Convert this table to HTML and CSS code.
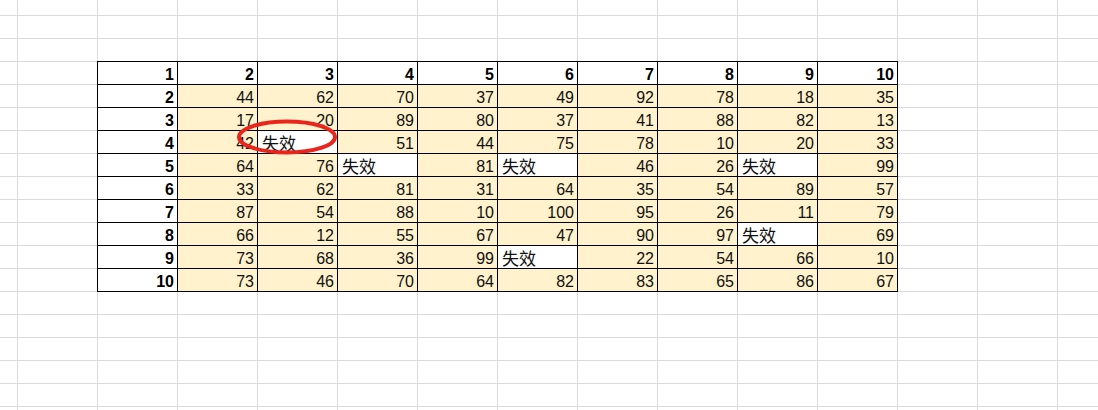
FILE: index.html
```html
<!DOCTYPE html>
<html lang="zh">
<head>
<meta charset="utf-8">
<title>Sheet</title>
<link rel="stylesheet" href="styles.css">
</head>
<body>
<div class="sheet">
  <div class="wrap">
    <div class="grid">
      <div class="c h">1</div><div class="c h">2</div><div class="c h">3</div><div class="c h">4</div><div class="c h">5</div><div class="c h">6</div><div class="c h">7</div><div class="c h">8</div><div class="c h">9</div><div class="c h">10</div>

      <div class="c h">2</div><div class="c n">44</div><div class="c n">62</div><div class="c n">70</div><div class="c n">37</div><div class="c n">49</div><div class="c n">92</div><div class="c n">78</div><div class="c n">18</div><div class="c n">35</div>

      <div class="c h">3</div><div class="c n">17</div><div class="c n">20</div><div class="c n">89</div><div class="c n">80</div><div class="c n">37</div><div class="c n">41</div><div class="c n">88</div><div class="c n">82</div><div class="c n">13</div>

      <div class="c h">4</div><div class="c n">42</div><div class="c x">失效</div><div class="c n">51</div><div class="c n">44</div><div class="c n">75</div><div class="c n">78</div><div class="c n">10</div><div class="c n">20</div><div class="c n">33</div>

      <div class="c h">5</div><div class="c n">64</div><div class="c n">76</div><div class="c x">失效</div><div class="c n">81</div><div class="c x">失效</div><div class="c n">46</div><div class="c n">26</div><div class="c x">失效</div><div class="c n">99</div>

      <div class="c h">6</div><div class="c n">33</div><div class="c n">62</div><div class="c n">81</div><div class="c n">31</div><div class="c n">64</div><div class="c n">35</div><div class="c n">54</div><div class="c n">89</div><div class="c n">57</div>

      <div class="c h">7</div><div class="c n">87</div><div class="c n">54</div><div class="c n">88</div><div class="c n">10</div><div class="c n">100</div><div class="c n">95</div><div class="c n">26</div><div class="c n">11</div><div class="c n">79</div>

      <div class="c h">8</div><div class="c n">66</div><div class="c n">12</div><div class="c n">55</div><div class="c n">67</div><div class="c n">47</div><div class="c n">90</div><div class="c n">97</div><div class="c x">失效</div><div class="c n">69</div>

      <div class="c h">9</div><div class="c n">73</div><div class="c n">68</div><div class="c n">36</div><div class="c n">99</div><div class="c x">失效</div><div class="c n">22</div><div class="c n">54</div><div class="c n">66</div><div class="c n">10</div>

      <div class="c h">10</div><div class="c n">73</div><div class="c n">46</div><div class="c n">70</div><div class="c n">64</div><div class="c n">82</div><div class="c n">83</div><div class="c n">65</div><div class="c n">86</div><div class="c n">67</div>
    </div>
    <svg class="mark" width="110" height="44" viewBox="0 0 110 44" aria-hidden="true">
      <ellipse cx="55" cy="22" rx="48" ry="15.5" fill="none" stroke="#e8261c" stroke-width="4"/>
    </svg>
  </div>
</div>
</body>
</html>
```

FILE: styles.css
```css
html, body {
  margin: 0;
  padding: 0;
  background: #fff;
}

.sheet {
  width: 1098px;
  height: 410px;
  overflow: hidden;
  background-color: #fff;
  background-image:
    linear-gradient(to right, #dadada 1px, transparent 1px),
    linear-gradient(to bottom, #dadada 1px, transparent 1px);
  background-size: 80px 23px;
  background-position: 17px 15px;
  padding: 61px 0 0 97px;
  box-sizing: border-box;
}

.wrap {
  position: relative;
  width: 801px;
}

.grid {
  display: grid;
  grid-template-columns: repeat(10, 80px);
  grid-auto-rows: 23px;
  border-left: 1px solid #000;
  border-top: 1px solid #000;
  width: 800px;
  font-family: "Liberation Sans", Arial, sans-serif;
  font-size: 16px;
  color: #111;
}

.c {
  box-sizing: border-box;
  border-right: 1px solid #000;
  border-bottom: 1px solid #000;
  line-height: 18px;
  padding-top: 4px;
  white-space: nowrap;
}

.h {
  background: #fff;
  font-weight: bold;
  text-align: right;
  padding-right: 3px;
  color: #000;
}

.n {
  background: #fff2cc;
  text-align: right;
  padding-right: 3px;
}

.x {
  background: #fff;
  text-align: left;
  padding-left: 4px;
  padding-top: 1px;
  line-height: 21px;
  font-family: "Noto Sans CJK SC", "Liberation Sans", sans-serif;
  font-size: 17px;
  color: #111;
}

.mark {
  position: absolute;
  left: 135px;
  top: 54px;
}
```
